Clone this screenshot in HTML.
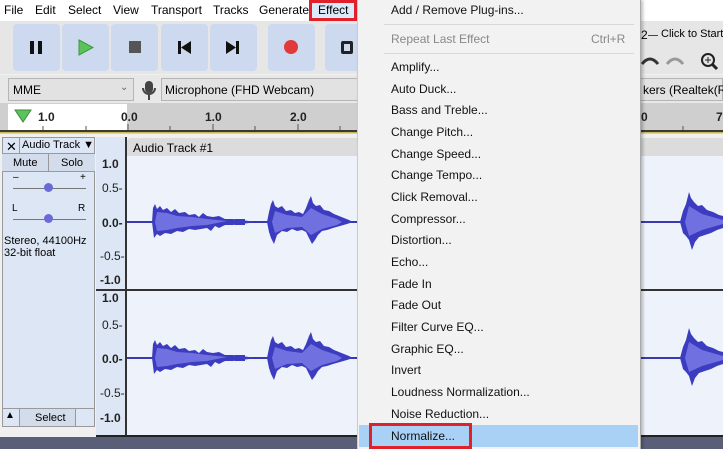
<!DOCTYPE html>
<html><head><meta charset="utf-8"><style>
*{margin:0;padding:0;box-sizing:border-box}
body{width:723px;height:449px;overflow:hidden;position:relative;background:#f0f0f0;font-family:"Liberation Sans",sans-serif;font-size:12px;color:#000}
.a{position:absolute;white-space:nowrap}
.mb span{position:absolute;top:3px;font-size:12px;color:#000}
.btn{position:absolute;top:24px;width:47px;height:47px;background:#cdd9ee;border-radius:4px}
.menu{position:absolute;left:357px;top:0;width:284px;height:449px;background:#f2f2f2;border-left:1px solid #ccc;border-right:1px solid #aaa;box-shadow:2px 0 3px rgba(0,0,0,.25)}
.mi{position:absolute;left:33px;font-size:12px;color:#111;white-space:nowrap}
.sep{position:absolute;left:26px;right:6px;height:1px;background:#d8d8d8}
.lbl{position:absolute;font-size:12px;font-weight:bold;color:#222}
</style></head><body>
<div class="a" style="left:0;top:0;width:723px;height:21px;background:#fff"></div>
<div class="a" style="left:309px;top:0;width:48px;height:21px;border:3px solid #e0202a;background:#dbe9f8"></div>
<div class="mb">
<span style="left:4px">File</span><span style="left:35px">Edit</span><span style="left:68px">Select</span><span style="left:113px">View</span><span style="left:151px">Transport</span><span style="left:213px">Tracks</span><span style="left:259px">Generate</span><span style="left:318px">Effect</span>
</div>
<div class="a" style="left:0;top:21px;width:723px;height:53px;background:#e6e6e6"></div>
<div class="btn" style="left:13px"></div><div class="btn" style="left:62px"></div><div class="btn" style="left:111px"></div><div class="btn" style="left:161px"></div><div class="btn" style="left:210px"></div><div class="btn" style="left:268px"></div><div class="btn" style="left:325px"></div>
<div class="a" style="left:30px;top:41px;width:4px;height:13px;background:#111"></div><div class="a" style="left:38px;top:41px;width:4px;height:13px;background:#111"></div>
<svg class="a" style="left:78px;top:39px" width="16" height="17"><polygon points="1,1 15,8.5 1,16" fill="#5cc25c" stroke="#3a9a3a"/></svg>
<div class="a" style="left:129px;top:41px;width:12px;height:12px;background:#555"></div>
<div class="a" style="left:178px;top:41px;width:3px;height:13px;background:#111"></div><svg class="a" style="left:181px;top:41px" width="10" height="13"><polygon points="10,0 0,6.5 10,13" fill="#111"/></svg>
<svg class="a" style="left:226px;top:41px" width="10" height="13"><polygon points="0,0 10,6.5 0,13" fill="#111"/></svg><div class="a" style="left:236px;top:41px;width:3px;height:13px;background:#111"></div>
<div class="a" style="left:284px;top:40px;width:14px;height:14px;border-radius:50%;background:#e03a3a"></div>
<div class="a" style="left:341px;top:41px;width:12px;height:13px;border:3px solid #222;border-radius:2px"></div>
<div class="a" style="left:0;top:75px;width:723px;height:28px;background:#e8e8e8"></div>
<div class="a" style="left:8px;top:78px;width:126px;height:23px;background:#e2e2e2;border:1px solid #b5b5b5"></div>
<span class="a" style="left:13px;top:83px">MME</span><span class="a" style="left:120px;top:82px;color:#666;font-size:10px">⌄</span>
<div class="a" style="left:145px;top:81px;width:8px;height:12px;background:#444;border-radius:4px"></div>
<div class="a" style="left:142px;top:88px;width:14px;height:7px;border:2px solid #444;border-top:none;border-radius:0 0 7px 7px"></div>
<div class="a" style="left:148px;top:95px;width:2px;height:5px;background:#444"></div>
<div class="a" style="left:161px;top:78px;width:200px;height:23px;background:#e2e2e2;border:1px solid #b5b5b5"></div>
<span class="a" style="left:165px;top:83px">Microphone (FHD Webcam)</span>
<div class="a" style="left:0;top:103px;width:723px;height:31px;background:#cfcfcf"></div>
<div class="a" style="left:8px;top:104px;width:119px;height:27px;background:#fff"></div>
<svg class="a" style="left:14px;top:109px" width="18" height="14"><polygon points="1,1 17,1 9,13" fill="#5cc25c" stroke="#3a8a3a"/></svg>
<span class="lbl" style="left:38px;top:110px">1.0</span><span class="lbl" style="left:121px;top:110px">0.0</span><span class="lbl" style="left:205px;top:110px">1.0</span><span class="lbl" style="left:290px;top:110px">2.0</span>
<svg class="a" style="left:0;top:124px" width="723" height="7"><path d="M43,2v5M86,2v5M128,0v7M170,2v5M213,0v7M255,2v5M298,0v7M340,2v5M683,2v5" stroke="#555"/></svg>
<div class="a" style="left:0;top:130px;width:723px;height:3px;background:#3a3a30;border-bottom:1px solid #c8b85a"></div>
<div class="a" style="left:0;top:134px;width:723px;height:303px;background:#f0f0f0"></div>
<div class="a" style="left:2px;top:137px;width:93px;height:290px;background:#dde6f4;border:1px solid #999"></div>
<div class="a" style="left:2px;top:137px;width:93px;height:17px;border-bottom:1px solid #999"></div>
<span class="a" style="left:6px;top:139px;font-size:13px">✕</span>
<span class="a" style="left:22px;top:139px;font-size:11px">Audio Track ▼</span>
<div class="a" style="left:19px;top:137px;width:1px;height:17px;background:#999"></div>
<div class="a" style="left:2px;top:154px;width:93px;height:18px;background:#d2dcea;border-bottom:1px solid #999"></div>
<span class="a" style="left:13px;top:157px;font-size:11px">Mute</span><span class="a" style="left:61px;top:157px;font-size:11px">Solo</span>
<div class="a" style="left:48px;top:154px;width:1px;height:18px;background:#999"></div>
<span class="a" style="left:13px;top:172px;font-size:10px">–</span><span class="a" style="left:80px;top:172px;font-size:10px">+</span>
<div class="a" style="left:13px;top:188px;width:73px;height:1px;background:#777"></div>
<div class="a" style="left:44px;top:183px;width:9px;height:9px;border-radius:50%;background:#6a6ad8"></div>
<span class="a" style="left:12px;top:203px;font-size:10px">L</span><span class="a" style="left:78px;top:203px;font-size:10px">R</span>
<div class="a" style="left:13px;top:219px;width:73px;height:1px;background:#777"></div>
<div class="a" style="left:44px;top:214px;width:9px;height:9px;border-radius:50%;background:#6a6ad8"></div>
<span class="a" style="left:4px;top:235px;font-size:11px;line-height:12px">Stereo, 44100Hz<br>32-bit float</span>
<div class="a" style="left:2px;top:408px;width:93px;height:19px;border-top:1px solid #999"></div>
<div class="a" style="left:19px;top:408px;width:57px;height:19px;background:#d2dcea;border:1px solid #999"></div>
<span class="a" style="left:5px;top:410px;font-size:10px">▲</span><span class="a" style="left:35px;top:412px;font-size:11px">Select</span>
<div class="a" style="left:96px;top:137px;width:30px;height:300px;background:#dde6f4"></div>
<div class="a" style="left:125px;top:137px;width:2px;height:300px;background:#333"></div>
<span class="lbl" style="left:102px;top:157px">1.0</span><span class="lbl" style="left:102px;top:181px;font-weight:normal">0.5-</span><span class="lbl" style="left:102px;top:216px">0.0-</span><span class="lbl" style="left:100px;top:249px;font-weight:normal">-0.5-</span><span class="lbl" style="left:100px;top:273px">-1.0</span>
<span class="lbl" style="left:102px;top:291px">1.0</span><span class="lbl" style="left:102px;top:318px;font-weight:normal">0.5-</span><span class="lbl" style="left:102px;top:352px">0.0-</span><span class="lbl" style="left:100px;top:386px;font-weight:normal">-0.5-</span><span class="lbl" style="left:100px;top:411px">-1.0</span>
<div class="a" style="left:127px;top:138px;width:596px;height:18px;background:#dcdcdc;border-radius:4px 0 0 0"></div>
<span class="a" style="left:133px;top:141px">Audio Track #1</span>
<div class="a" style="left:127px;top:156px;width:596px;height:280px;background:#eef3fb"></div>
<div class="a" style="left:96px;top:289px;width:627px;height:2px;background:#333"></div>
<div class="a" style="left:96px;top:435px;width:627px;height:2px;background:#222"></div>
<svg class="a" style="left:127px;top:156px" width="596" height="280">
<g id="w">
<line x1="0" y1="66" x2="596" y2="66" stroke="#3838b0" stroke-width="2"/>
<path d="M25,66 L26,52 L28,48 L30,53 L33,50 L36,54 L40,52 L44,56 L48,53 L52,57 L58,56 L62,59 L68,58 L72,61 L76,57 L80,60 L86,61 L92,60 L98,63 L106,63 L114,64 L122,65 L130,66 L122,67 L114,68 L106,69 L98,69 L92,72 L88,70 L84,75 L80,72 L74,73 L68,74 L62,73 L56,76 L50,75 L44,78 L38,77 L33,80 L30,78 L27,82 Z" fill="#3c3cc0"/>
<path d="M28,66 L30,56 L40,57 L50,60 L65,61 L80,63 L100,65 L80,69 L65,70 L50,72 L40,74 L30,75 Z" fill="#7070e0"/>
<rect x="108" y="63" width="10" height="6" fill="#3c3cc0"/>
<path d="M140,66 L142,56 L144,48 L146,44 L148,50 L151,52 L155,50 L159,55 L164,54 L168,57 L172,56 L176,58 L179,52 L182,44 L184,40 L186,47 L189,50 L193,49 L197,54 L202,55 L207,58 L212,60 L217,62 L222,64 L226,66 L220,68 L213,70 L206,72 L200,74 L195,75 L191,79 L188,84 L185,88 L182,82 L179,76 L175,74 L170,75 L165,73 L160,76 L155,75 L150,79 L147,88 L144,82 L142,76 Z" fill="#3c3cc0"/>
<path d="M145,66 L148,55 L160,59 L175,61 L184,52 L195,58 L210,63 L215,66 L210,69 L195,73 L184,79 L175,71 L160,72 L148,77 Z" fill="#7070e0"/>
<path d="M553,66 L556,55 L559,48 L562,36 L564,42 L567,46 L571,50 L575,49 L580,54 L586,56 L592,59 L596,60 L596,72 L590,74 L584,77 L578,79 L572,81 L568,86 L565,94 L562,84 L559,80 L556,77 Z" fill="#3c3cc0"/>
<path d="M558,66 L562,50 L575,58 L596,64 L596,68 L575,74 L562,80 Z" fill="#7070e0"/>
</g>
<use href="#w" y="136"/>
</svg>
<div class="a" style="left:0;top:437px;width:723px;height:12px;background:#5a5f78"></div>
<span class="a" style="left:641px;top:28px">2</span><div class="a" style="left:648px;top:35px;width:10px;height:1px;background:#444"></div><span class="a" style="left:661px;top:28px;font-size:11px">Click to Start</span>
<div class="a" style="left:641px;top:46px;width:82px;height:28px;background:#e6e6e6"></div>
<svg class="a" style="left:640px;top:52px" width="83" height="20"><path d="M2,12 Q10,2 18,12" fill="none" stroke="#333" stroke-width="3"/><path d="M27,12 Q35,2 43,12" fill="none" stroke="#999" stroke-width="3"/><circle cx="68" cy="8" r="6" fill="none" stroke="#222" stroke-width="2"/><line x1="72" y1="12" x2="77" y2="17" stroke="#222" stroke-width="3"/><path d="M65,8h6M68,5v6" stroke="#222"/></svg>
<div class="a" style="left:641px;top:78px;width:82px;height:23px;background:#e2e2e2;border:1px solid #b5b5b5;border-left:none"></div>
<span class="a" style="left:643px;top:83px">kers (Realtek(R) A</span>
<span class="lbl" style="left:641px;top:110px">0</span><span class="lbl" style="left:716px;top:110px">7.</span>
<div class="menu">
<div class="mi" style="top:3px">Add / Remove Plug-ins...</div>
<div class="sep" style="top:24px"></div>
<div class="mi" style="top:32px;color:#888">Repeat Last Effect</div><div class="mi" style="top:32px;left:233px;color:#888">Ctrl+R</div>
<div class="sep" style="top:53px"></div>
<div class="mi" style="top:60px">Amplify...</div>
<div class="mi" style="top:82px">Auto Duck...</div>
<div class="mi" style="top:103px">Bass and Treble...</div>
<div class="mi" style="top:125px">Change Pitch...</div>
<div class="mi" style="top:147px">Change Speed...</div>
<div class="mi" style="top:168px">Change Tempo...</div>
<div class="mi" style="top:190px">Click Removal...</div>
<div class="mi" style="top:212px">Compressor...</div>
<div class="mi" style="top:233px">Distortion...</div>
<div class="mi" style="top:255px">Echo...</div>
<div class="mi" style="top:277px">Fade In</div>
<div class="mi" style="top:298px">Fade Out</div>
<div class="mi" style="top:320px">Filter Curve EQ...</div>
<div class="mi" style="top:342px">Graphic EQ...</div>
<div class="mi" style="top:363px">Invert</div>
<div class="mi" style="top:385px">Loudness Normalization...</div>
<div class="mi" style="top:407px">Noise Reduction...</div>
<div class="a" style="left:1px;top:425px;width:279px;height:22px;background:#a9d0f5"></div>
<div class="mi" style="top:429px">Normalize...</div>
<div class="a" style="left:11px;top:423px;width:103px;height:26px;border:3px solid #e0202a"></div>
</div>
</body></html>
